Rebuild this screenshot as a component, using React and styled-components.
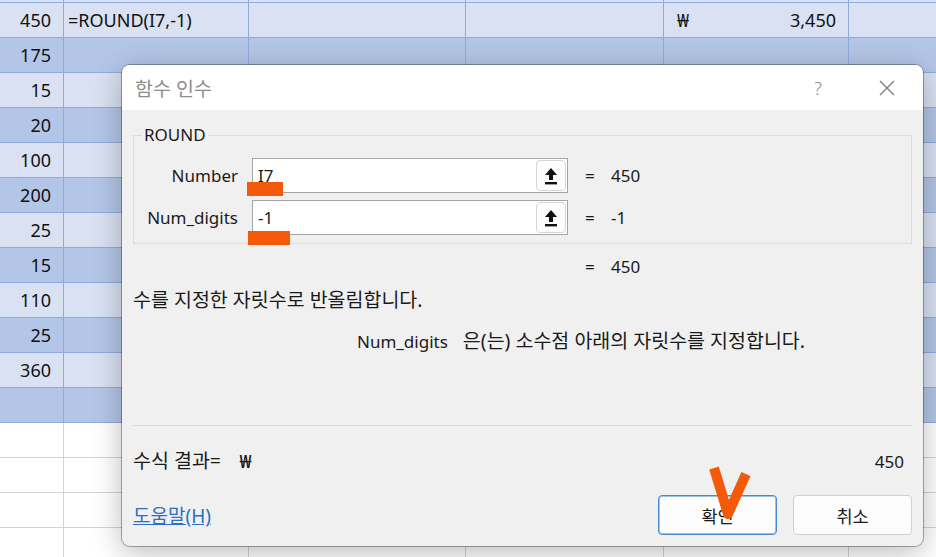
import React from "react";
import styled, { createGlobalStyle } from "styled-components";

const GlobalStyle = createGlobalStyle`
  html, body {
    margin: 0;
    padding: 0;
    background: #ffffff;
  }
  body {
    font-family: "Noto Sans", "Noto Sans CJK KR", sans-serif;
    overflow: hidden;
  }
`;

const COLS = [64, 185, 217, 198, 185, 200];

const rows = [
  { tone: "light", a: "" },
  { tone: "light", a: "450", b: "=ROUND(I7,-1)", e: "3,450" },
  { tone: "dark", a: "175" },
  { tone: "light", a: "15" },
  { tone: "dark", a: "20" },
  { tone: "light", a: "100" },
  { tone: "dark", a: "200" },
  { tone: "light", a: "25" },
  { tone: "dark", a: "15" },
  { tone: "light", a: "110" },
  { tone: "dark", a: "25" },
  { tone: "light", a: "360" },
  { tone: "dark", a: "" },
  { tone: "white" },
  { tone: "white" },
  { tone: "white" },
  { tone: "white" },
];

const tones = {
  light: { bg: "#d9e1f2", line: "#8faadc" },
  dark: { bg: "#b4c6e7", line: "#8faadc" },
  white: { bg: "#ffffff", line: "#d4d4d4" },
};

export default function App() {
  return (
    <Page>
      <GlobalStyle />
      <Sheet>
        {rows.map((row, i) => (
          <Row key={i} $tone={row.tone}>
            {COLS.map((w, c) => (
              <Cell key={c} $w={w} $tone={row.tone} $num={c === 0}>
                {c === 0 && row.a}
                {c === 1 && row.b}
                {c === 4 && row.e && (
                  <Money>
                    <span>₩</span>
                    <span>{row.e}</span>
                  </Money>
                )}
              </Cell>
            ))}
          </Row>
        ))}
      </Sheet>

      <Dialog>
        <TitleBar>
          <Title>함수 인수</Title>
          <TitleButtons>
            <Help>?</Help>
            <svg width="18" height="18" viewBox="0 0 18 18">
              <path d="M2 2 L16 16 M16 2 L2 16" stroke="#7a7a7a" strokeWidth="1.3" />
            </svg>
          </TitleButtons>
        </TitleBar>

        <Body>
          <Group>
            <Legend>ROUND</Legend>
            <ArgGrid>
              <ArgLabel>Number</ArgLabel>
              <ArgInput>
                <span>I7</span>
                <RefButton>
                  <UploadIcon />
                </RefButton>
              </ArgInput>
              <ArgValue>
                <Eq>=</Eq>
                <span>450</span>
              </ArgValue>

              <ArgLabel>Num_digits</ArgLabel>
              <ArgInput>
                <span>-1</span>
                <RefButton>
                  <UploadIcon />
                </RefButton>
              </ArgInput>
              <ArgValue>
                <Eq>=</Eq>
                <span>-1</span>
              </ArgValue>
            </ArgGrid>
          </Group>

          <ResultLine>
            <Eq>=</Eq>
            <span>450</span>
          </ResultLine>

          <Description>
            <Ko>수를 지정한 자릿수로 반올림합니다.</Ko>
          </Description>

          <ArgHelp>
            <span>Num_digits</span>
            <Ko>은(는) 소수점 아래의 자릿수를 지정합니다.</Ko>
          </ArgHelp>

          <Separator />

          <FormulaResult>
            <span>
              <Ko>수식 결과=</Ko> <Won>₩</Won>
            </span>
            <span>450</span>
          </FormulaResult>

          <Footer>
            <HelpLink href="#">도움말(H)</HelpLink>
            <Buttons>
              <Button $primary>확인</Button>
              <Button>취소</Button>
            </Buttons>
          </Footer>
        </Body>
      </Dialog>

      <Mark style={{ left: 247, top: 182, width: 36, height: 14 }} />
      <Mark style={{ left: 248, top: 231, width: 42, height: 14 }} />
      <Check width="50" height="56" viewBox="0 0 50 56">
        <path d="M8 2 L22 48 L40 8" fill="none" stroke="#f25a0a" strokeWidth="10" strokeLinejoin="round" />
      </Check>
    </Page>
  );
}

function UploadIcon() {
  return (
    <svg width="14" height="18" viewBox="0 0 14 18">
      <path d="M7 1 L13 8 H9 V13 H5 V8 H1 Z" fill="#111" />
      <rect x="1" y="15" width="12" height="2.4" fill="#111" />
    </svg>
  );
}

const Page = styled.div`
  position: relative;
  width: 936px;
  height: 557px;
  overflow: hidden;
`;

const Sheet = styled.div`
  margin-top: -32px;
  display: flex;
  flex-direction: column;
`;

const Row = styled.div`
  display: flex;
  height: 35px;
  box-sizing: border-box;
  background: ${(p) => tones[p.$tone].bg};
  border-bottom: 1px solid ${(p) => tones[p.$tone].line};
  font-size: 18px;
  color: #111;
`;

const Cell = styled.div`
  flex: 0 0 ${(p) => p.$w}px;
  box-sizing: border-box;
  border-right: 1px solid ${(p) => tones[p.$tone].line};
  display: flex;
  align-items: center;
  justify-content: ${(p) => (p.$num ? "flex-end" : "flex-start")};
  padding: ${(p) => (p.$num ? "0 12px 0 0" : "0 0 0 4px")};
  white-space: nowrap;
`;

const Money = styled.div`
  display: flex;
  justify-content: space-between;
  width: 100%;
  padding: 0 12px 0 9px;
`;

const Dialog = styled.div`
  position: absolute;
  left: 122px;
  top: 65px;
  width: 801px;
  height: 481px;
  box-sizing: border-box;
  background: #f0f0f0;
  border-radius: 8px;
  overflow: hidden;
  box-shadow: 0 0 0 1px rgba(0, 0, 0, 0.3), 0 6px 30px rgba(0, 0, 0, 0.28);
  display: flex;
  flex-direction: column;
  color: #1a1a1a;
  font-size: 17px;
`;

const Ko = styled.span`
  font-size: 19.5px;
`;

const TitleBar = styled.div`
  height: 45px;
  flex: 0 0 45px;
  background: #ffffff;
  display: flex;
  align-items: center;
  justify-content: space-between;
  padding: 0 27px 0 13px;
`;

const Title = styled.div`
  color: #8d8d8d;
  font-size: 19.5px;
`;

const TitleButtons = styled.div`
  display: flex;
  align-items: center;
  gap: 56px;
`;

const Help = styled.span`
  color: #8d8d8d;
  font-size: 18px;
  font-weight: 300;
`;

const Body = styled.div`
  flex: 1;
  display: flex;
  flex-direction: column;
  padding: 0 11px 13px;
`;

const Group = styled.fieldset`
  margin: 15px 0 0;
  padding: 13px 0 8px;
  border: 1px solid #dcdcdc;
  min-width: 0;
`;

const Legend = styled.legend`
  margin-left: 8px;
  padding: 0 2px;
  line-height: 20px;
  font-size: 17px;
`;

const ArgGrid = styled.div`
  display: grid;
  grid-template-columns: 104px 316px auto;
  column-gap: 14px;
  row-gap: 7px;
  align-items: center;
`;

const ArgLabel = styled.div`
  text-align: right;
`;

const ArgInput = styled.div`
  height: 35px;
  box-sizing: border-box;
  border: 1px solid #a5a5a5;
  background: #ffffff;
  display: flex;
  align-items: center;
  justify-content: space-between;
  padding: 0 0 0 5px;
`;

const RefButton = styled.div`
  width: 30px;
  height: 31px;
  box-sizing: border-box;
  border: 1px solid #d6d6d6;
  border-radius: 4px;
  display: flex;
  align-items: center;
  justify-content: center;
  margin-right: 1px;
  background: #fdfdfd;
`;

const ArgValue = styled.div`
  display: flex;
  align-items: center;
  padding-left: 3px;
`;

const Eq = styled.span`
  display: inline-block;
  width: 26px;
`;

const ResultLine = styled.div`
  margin-top: 10px;
  height: 24px;
  display: flex;
  align-items: center;
  padding-left: 452px;
`;

const Description = styled.div`
  margin-top: 8px;
  height: 24px;
  display: flex;
  align-items: center;
`;

const ArgHelp = styled.div`
  margin-top: 15px;
  height: 24px;
  padding-left: 224px;
  display: flex;
  align-items: baseline;
  gap: 15px;
`;

const Separator = styled.div`
  margin-top: 76px;
  height: 1px;
  background: #dadada;
`;

const FormulaResult = styled.div`
  margin-top: 19px;
  height: 24px;
  display: flex;
  align-items: baseline;
  justify-content: space-between;
  padding-right: 8px;
`;

const Won = styled.span`
  margin-left: 14px;
  font-weight: 600;
`;

const Footer = styled.div`
  margin-top: 26px;
  display: flex;
  align-items: center;
  justify-content: space-between;
`;

const HelpLink = styled.a`
  color: #2d6fc0;
  text-decoration: underline;
  font-size: 19px;
`;

const Buttons = styled.div`
  display: flex;
  gap: 16px;
`;

const Button = styled.button`
  width: 119px;
  height: 40px;
  box-sizing: border-box;
  border-radius: 4px;
  background: #fdfdfd;
  border: 1px solid ${(p) => (p.$primary ? "#4a8ac8" : "#d0d0d0")};
  box-shadow: ${(p) => (p.$primary ? "inset 0 0 0 1px #9cc3e8" : "none")};
  font-family: "Noto Sans", "Noto Sans CJK KR", sans-serif;
  font-size: 17.5px;
  color: #1a1a1a;
`;

const Mark = styled.span`
  position: absolute;
  background: #f25a0a;
`;

const Check = styled.svg`
  position: absolute;
  left: 706px;
  top: 466px;
`;
